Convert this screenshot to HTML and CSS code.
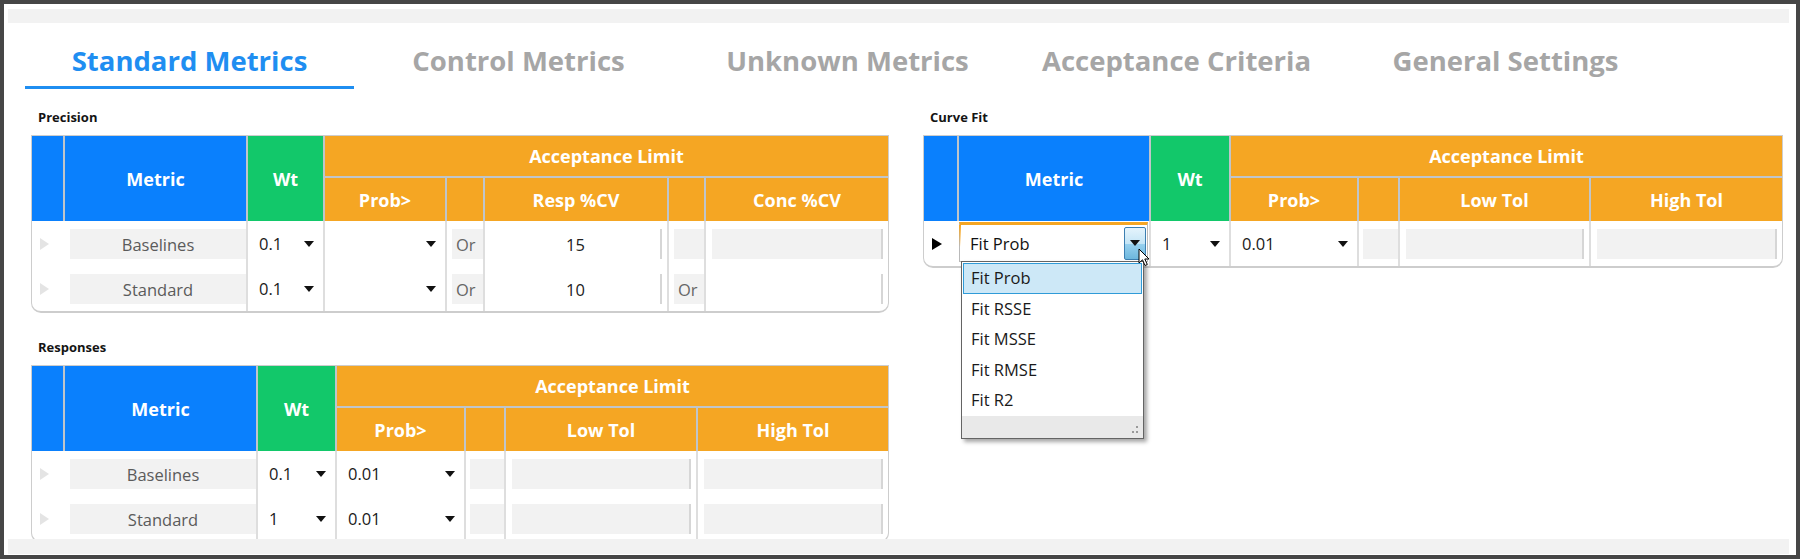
FILE: index.html
```html
<!DOCTYPE html>
<html lang="en">
<head>
    <meta charset="UTF-8">
    <title>Standard Metrics</title>
    <link rel="stylesheet" href="styles.css">
</head>
<body>
<div class="window">
    <div class="strip"></div>

    <!-- Tabs -->
    <nav class="tabs">
        <div class="tab active">Standard Metrics</div>
        <div class="tab">Control Metrics</div>
        <div class="tab">Unknown Metrics</div>
        <div class="tab">Acceptance Criteria</div>
        <div class="tab">General Settings</div>
    </nav>

    <main class="content">
        <!-- Left column -->
        <section class="panel left">
            <div class="label">Precision</div>
            <div class="grid precision">
                <div class="hd blue tall"></div>
                <div class="hd blue tall sep">Metric</div>
                <div class="hd green tall sep">Wt</div>
                <div class="hd orange band sep">Acceptance Limit</div>
                <div class="hd orange sep">Prob&gt;</div>
                <div class="hd orange sep"></div>
                <div class="hd orange sep">Resp %CV</div>
                <div class="hd orange sep"></div>
                <div class="hd orange sep">Conc %CV</div>

                <div class="c arrow"><span class="tri"></span></div>
                <div class="c"><div class="box name">Baselines</div></div>
                <div class="c line sel"><span>0.1</span><span class="caret"></span></div>
                <div class="c line sel"><span></span><span class="caret"></span></div>
                <div class="c line"><div class="box or">Or</div></div>
                <div class="c line"><div class="box input white">15</div></div>
                <div class="c line"><div class="box or"></div></div>
                <div class="c line"><div class="box input"></div></div>

                <div class="c arrow"><span class="tri"></span></div>
                <div class="c"><div class="box name">Standard</div></div>
                <div class="c line sel"><span>0.1</span><span class="caret"></span></div>
                <div class="c line sel"><span></span><span class="caret"></span></div>
                <div class="c line"><div class="box or">Or</div></div>
                <div class="c line"><div class="box input white">10</div></div>
                <div class="c line"><div class="box or">Or</div></div>
                <div class="c line"><div class="box input white"></div></div>
            </div>

            <div class="label gap">Responses</div>
            <div class="grid responses">
                <div class="hd blue tall"></div>
                <div class="hd blue tall sep">Metric</div>
                <div class="hd green tall sep">Wt</div>
                <div class="hd orange band sep">Acceptance Limit</div>
                <div class="hd orange sep">Prob&gt;</div>
                <div class="hd orange sep"></div>
                <div class="hd orange sep">Low Tol</div>
                <div class="hd orange sep">High Tol</div>

                <div class="c arrow"><span class="tri"></span></div>
                <div class="c"><div class="box name">Baselines</div></div>
                <div class="c line sel"><span>0.1</span><span class="caret"></span></div>
                <div class="c line sel"><span>0.01</span><span class="caret"></span></div>
                <div class="c line"><div class="box blank"></div></div>
                <div class="c line"><div class="box input"></div></div>
                <div class="c line"><div class="box input"></div></div>

                <div class="c arrow"><span class="tri"></span></div>
                <div class="c"><div class="box name">Standard</div></div>
                <div class="c line sel"><span>1</span><span class="caret"></span></div>
                <div class="c line sel"><span>0.01</span><span class="caret"></span></div>
                <div class="c line"><div class="box blank"></div></div>
                <div class="c line"><div class="box input"></div></div>
                <div class="c line"><div class="box input"></div></div>
            </div>
        </section>

        <!-- Right column -->
        <section class="panel right">
            <div class="label">Curve Fit</div>
            <div class="grid curve">
                <div class="hd blue tall"></div>
                <div class="hd blue tall sep">Metric</div>
                <div class="hd green tall sep">Wt</div>
                <div class="hd orange band sep">Acceptance Limit</div>
                <div class="hd orange sep">Prob&gt;</div>
                <div class="hd orange sep"></div>
                <div class="hd orange sep">Low Tol</div>
                <div class="hd orange sep">High Tol</div>

                <div class="c arrow"><span class="tri on"></span></div>
                <div class="c">
                    <div class="combo">
                        <span>Fit Prob</span>
                        <span class="combo-btn"><span class="caret"></span></span>
                        <svg class="cursor" width="13" height="19" viewBox="0 0 13 19">
                            <path d="M1 1 L1 15 L4.5 11.8 L7 17.5 L9.3 16.5 L6.8 11 L11 11 Z" fill="#fff" stroke="#000" stroke-width="1"/>
                        </svg>
                        <!-- open list -->
                        <div class="popup">
                            <div class="item selected">Fit Prob</div>
                            <div class="item">Fit RSSE</div>
                            <div class="item">Fit MSSE</div>
                            <div class="item">Fit RMSE</div>
                            <div class="item">Fit R2</div>
                            <div class="popup-foot">
                                <svg width="8" height="8" viewBox="0 0 8 8">
                                    <rect x="5" y="0" width="2" height="2" fill="#9a9a9a"/>
                                    <rect x="1" y="5" width="2" height="2" fill="#9a9a9a"/>
                                    <rect x="5" y="5" width="2" height="2" fill="#9a9a9a"/>
                                </svg>
                            </div>
                        </div>
                    </div>
                </div>
                <div class="c line sel"><span>1</span><span class="caret"></span></div>
                <div class="c line sel"><span>0.01</span><span class="caret"></span></div>
                <div class="c line"><div class="box blank"></div></div>
                <div class="c line"><div class="box input"></div></div>
                <div class="c line"><div class="box input"></div></div>
            </div>
        </section>
    </main>

    <div class="strip bottom"></div>
</div>
</body>
</html>
```

FILE: styles.css
```css
* {
    margin: 0;
    padding: 0;
    box-sizing: border-box;
}
body {
    font-family: "Open Sans", "Liberation Sans", sans-serif;
    background: #fff;
    color: #1a1a1a;
}
.window {
    width: 1800px;
    height: 559px;
    border: 4px solid #464646;
    display: flex;
    flex-direction: column;
    background: #fff;
}
/* grey bars top and bottom */
.strip {
    height: 14px;
    margin: 5px 7px 0 4px;
    background: #f2f2f2;
    flex-shrink: 0;
}
.strip.bottom {
    height: 15px;
    margin: 0 7px 1px 4px;
}
/* Tabs */
.tabs {
    display: flex;
    margin: 19px 0 0 21px;
    flex-shrink: 0;
}
.tab {
    width: 329px;
    text-align: center;
    font-size: 27.5px;
    font-weight: 700;
    line-height: 38px;
    color: #a6a6a6;
    padding-bottom: 6px;
    border-bottom: 3px solid transparent;
}
.tab.active {
    color: #1f8ef1;
    border-bottom-color: #1f8ef1;
}
/* Content */
.content {
    flex: 1;
    overflow: hidden;
    display: flex;
    gap: 34px;
    padding: 19px 13px 0 27px;
}
.panel.left {
    width: 858px;
}
.panel.right {
    flex: 1;
}
.label {
    font-size: 13px;
    font-weight: 700;
    line-height: 18px;
    padding-left: 7px;
    margin-bottom: 9px;
    color: #141414;
}
.label.gap {
    margin-top: 25px;
}
/* Grid tables */
.grid {
    display: grid;
    grid-template-rows: 42px 43px;
    grid-auto-rows: 45px;
    border: 1px solid #cdcdcd;
    border-bottom-width: 2px;
    border-radius: 0 0 10px 10px;
}
.precision {
    grid-template-columns: 31px 183px 77px 122px 38px 184px 37px 1fr;
}
.responses {
    grid-template-columns: 31px 193px 79px 129px 40px 192px 1fr;
}
.curve {
    grid-template-columns: 33px 192px 80px 128px 41px 191px 1fr;
}
.hd {
    display: flex;
    align-items: center;
    justify-content: center;
    color: #fff;
    font-size: 18px;
    font-weight: 700;
}
.hd.tall {
    grid-row: 1 / 3;
}
.hd.band {
    grid-row: 1;
    grid-column: 4 / -1;
    border-bottom: 2px solid #c0c5ca;
}
.hd.sep {
    border-left: 2px solid #c0c5ca;
}
.hd.blue {
    background: #0a80fd;
}
.hd.green {
    background: #12c86a;
}
.hd.orange {
    background: #f5a623;
}
/* body cells */
.c {
    display: flex;
    align-items: center;
    min-width: 0;
    font-size: 16.5px;
}
.c.line {
    border-left: 2px solid #dedede;
}
.c.arrow {
    padding-left: 8px;
}
.tri {
    width: 0;
    height: 0;
    border-left: 9px solid #e4e4e4;
    border-top: 6px solid transparent;
    border-bottom: 6px solid transparent;
}
.tri.on {
    border-left-color: #000;
    border-left-width: 10px;
}
.sel {
    justify-content: space-between;
    padding: 0 9px 0 11px;
    color: #1a1a1a;
}
.caret {
    width: 0;
    height: 0;
    border-top: 6px solid #111;
    border-left: 5.5px solid transparent;
    border-right: 5.5px solid transparent;
}
.box {
    flex: 1;
    align-self: stretch;
    margin: 8px 0 7px 7px;
    background: #f2f2f2;
    display: flex;
    align-items: center;
}
.box.name {
    justify-content: center;
    color: #5b5b5b;
}
.box.or {
    margin-left: 5px;
    padding-left: 4px;
    color: #666;
}
.box.blank {
    margin-left: 4px;
}
.box.input {
    margin: 8px 5px 7px 6px;
    border-right: 2px solid #d6d6d6;
    justify-content: center;
    color: #222;
}
.box.input.white {
    background: #fff;
}
/* Combo box with open list */
.combo {
    flex: 1;
    align-self: stretch;
    margin: 1px 1px 4px 2px;
    border: 1px solid #b9b9b9;
    border-top: 3px solid #f5a623;
    background: #fff;
    display: flex;
    align-items: center;
    padding-left: 10px;
    position: relative;
    color: #111;
}
.combo::before {
    content: "";
    position: absolute;
    left: -1px;
    top: 0;
    width: 2px;
    height: 60%;
    background: linear-gradient(#f5a623, rgba(245, 166, 35, 0));
}
.combo-btn {
    margin-left: auto;
    margin-right: 1px;
    width: 22px;
    height: 33px;
    border: 1px solid #3c7fb1;
    border-radius: 2px;
    background: linear-gradient(#e5f4fc, #c4e5f6 50%, #98d1ef 51%, #6db7dd);
    display: flex;
    align-items: center;
    justify-content: center;
}
.cursor {
    position: absolute;
    left: 178px;
    top: 23px;
    z-index: 6;
}
.popup {
    position: absolute;
    left: 1px;
    top: 100%;
    width: 183px;
    height: 178px;
    border: 1px solid #646464;
    background: #fff;
    box-shadow: 3px 3px 4px rgba(0, 0, 0, 0.35);
    padding-top: 1px;
    z-index: 5;
    display: flex;
    flex-direction: column;
}
.item {
    height: 30.6px;
    line-height: 28px;
    padding-left: 7px;
    margin: 0 1px;
    border: 1px solid transparent;
    font-size: 16.5px;
    color: #1a1a1a;
}
.item.selected {
    background: #cde8f7;
    border-color: #2f9bd8;
}
.popup-foot {
    margin-top: auto;
    height: 22px;
    background: #e9e9e9;
    display: flex;
    justify-content: flex-end;
    align-items: flex-end;
    padding: 0 4px 4px 0;
}
```
